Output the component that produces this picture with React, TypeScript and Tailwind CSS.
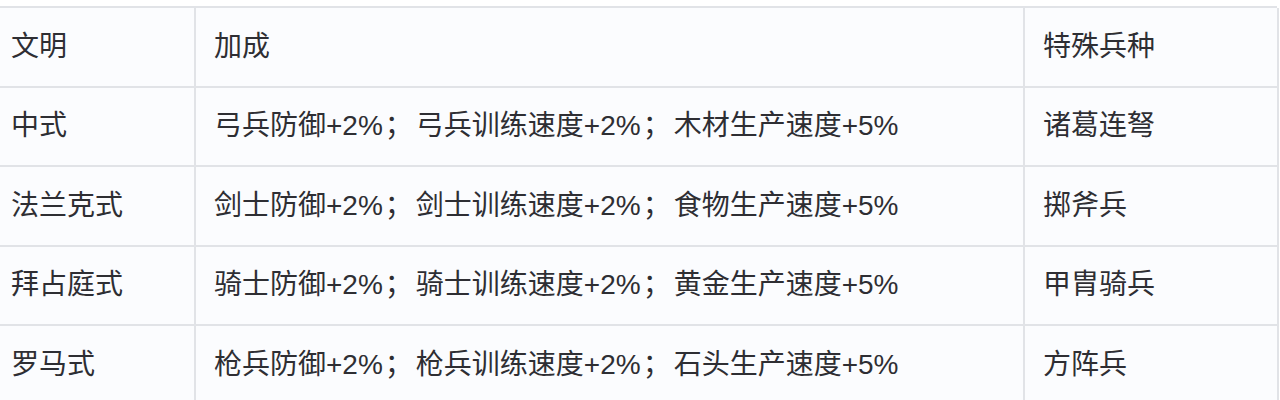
import React from "react";

const rows = [
  ["文明", "加成", "特殊兵种"],
  ["中式", "弓兵防御+2%；弓兵训练速度+2%；木材生产速度+5%", "诸葛连弩"],
  ["法兰克式", "剑士防御+2%；剑士训练速度+2%；食物生产速度+5%", "掷斧兵"],
  ["拜占庭式", "骑士防御+2%；骑士训练速度+2%；黄金生产速度+5%", "甲胄骑兵"],
  ["罗马式", "枪兵防御+2%；枪兵训练速度+2%；石头生产速度+5%", "方阵兵"],
];

function Cell({ text }: { text: string }) {
  const parts = text.split("；");
  return (
    <>
      {parts.map((p, i) => (
        <React.Fragment key={i}>
          {p}
          {i < parts.length - 1 && <span className="ml-[2px] mr-[3px]">；</span>}
        </React.Fragment>
      ))}
    </>
  );
}

export default function App() {
  return (
    <div className="w-[1280px] h-[400px] overflow-hidden bg-white pt-[6px]">
      <div
        className="ml-[-9px] w-[1286px] grid grid-cols-[203px_829px_254px] border-t-2 border-l-2 border-[#e1e3e7] bg-[#fbfcfe] text-[28px] text-[#2e2e33]"
        style={{ fontFamily: '"Liberation Sans", "Noto Sans CJK SC", sans-serif' }}
      >
        {rows.map((r, i) => (
          <React.Fragment key={i}>
            {r.map((c, j) => (
              <div
                key={j}
                className="h-[79.5px] flex items-center pl-[18px] border-r-2 border-b-2 border-[#e1e3e7] whitespace-nowrap"
              >
                <span>
                  <Cell text={c} />
                </span>
              </div>
            ))}
          </React.Fragment>
        ))}
      </div>
    </div>
  );
}
